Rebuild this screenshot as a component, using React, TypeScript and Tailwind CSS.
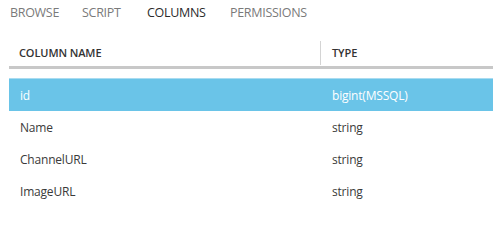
import React from "react";

const tabs = [
  { label: "BROWSE", x: "w-[72px]", active: false },
  { label: "SCRIPT", x: "w-[65px]", active: false },
  { label: "COLUMNS", x: "w-[83px]", active: true },
  { label: "PERMISSIONS", x: "", active: false },
];

const rows = [
  { name: "id", type: "bigint(MSSQL)" },
  { name: "Name", type: "string" },
  { name: "ChannelURL", type: "string" },
  { name: "ImageURL", type: "string" },
];

export default function App() {
  return (
    <div className="w-[493px] h-[246px] bg-white font-['Open_Sans',sans-serif] overflow-hidden">
      {/* Tabs */}
      <div className="flex pl-[10px] pt-[4px] h-[41px] text-[12.5px] tracking-[-0.3px]">
        {tabs.map((t) => (
          <div
            key={t.label}
            className={`${t.x} ${t.active ? "text-[#2b2b2b]" : "text-[#7a7a7a]"}`}
          >
            {t.label}
          </div>
        ))}
      </div>

      {/* Table */}
      <div className="ml-[9px]">
        <div className="flex h-[25px] items-center border-b-[3px] border-[#c8c8c8] box-content text-[11px] font-semibold text-[#333] tracking-[-0.1px]">
          <div className="w-[311px] pl-[10px]">COLUMN NAME</div>
          <div className="h-[24px] self-start border-l border-[#d4d4d4] flex items-center pl-[11px]">
            TYPE
          </div>
        </div>

        <div className="mt-[9px] text-[12px] text-[#3a3a3a] tracking-[-0.2px]">
          {rows.map((r, i) => (
            <div
              key={r.name}
              className={`flex items-center ${
                i === 0
                  ? "bg-[#6ac4e8] text-white border-t border-[#a9dcf1] h-[33px] pt-[1px]"
                  : "h-[32px] pt-[2px]"
              }`}
            >
              <div className="w-[311px] pl-[11px]">{r.name}</div>
              <div className="pl-[12px]">{r.type}</div>
            </div>
          ))}
        </div>
      </div>
    </div>
  );
}
